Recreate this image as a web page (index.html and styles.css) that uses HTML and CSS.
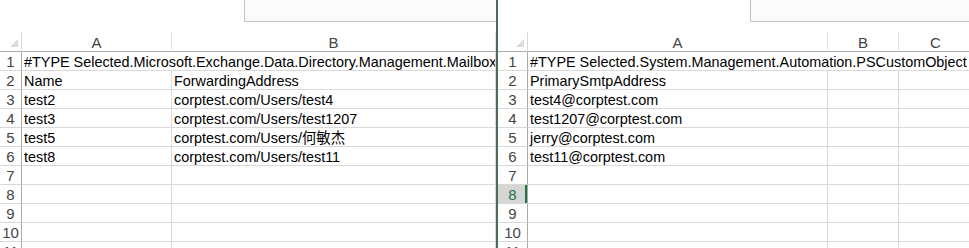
FILE: index.html
```html
<!DOCTYPE html>
<html lang="zh-CN">
<head>
    <meta charset="UTF-8">
    <title>Export compare</title>
    <link rel="stylesheet" href="styles.css">
</head>
<body>
<div class="screen">
    <!-- Ventana izquierda -->
    <section class="pane pane-left">
        <div class="ribbon"><div class="formula"></div></div>
        <div class="sheet sheet-left">
            <div class="corner"></div>
            <div class="colhead">A</div>
            <div class="colhead">B</div>

            <div class="rowhead">1</div><div class="cell span-2">#TYPE Selected.Microsoft.Exchange.Data.Directory.Management.Mailbox</div>
            <div class="rowhead">2</div><div class="cell">Name</div><div class="cell">ForwardingAddress</div>
            <div class="rowhead">3</div><div class="cell">test2</div><div class="cell">corptest.com/Users/test4</div>
            <div class="rowhead">4</div><div class="cell">test3</div><div class="cell">corptest.com/Users/test1207</div>
            <div class="rowhead">5</div><div class="cell">test5</div><div class="cell">corptest.com/Users/何敏杰</div>
            <div class="rowhead">6</div><div class="cell">test8</div><div class="cell">corptest.com/Users/test11</div>
            <div class="rowhead">7</div><div class="cell"></div><div class="cell"></div>
            <div class="rowhead">8</div><div class="cell"></div><div class="cell"></div>
            <div class="rowhead">9</div><div class="cell"></div><div class="cell"></div>
            <div class="rowhead">10</div><div class="cell"></div><div class="cell"></div>
            <div class="rowhead">11</div><div class="cell"></div><div class="cell"></div>
        </div>
    </section>

    <div class="divider"></div>

    <!-- Ventana derecha -->
    <section class="pane pane-right">
        <div class="ribbon"><div class="formula formula-right"></div></div>
        <div class="sheet sheet-right">
            <div class="corner"></div>
            <div class="colhead">A</div>
            <div class="colhead">B</div>
            <div class="colhead">C</div>
            <div class="colhead"></div>

            <div class="rowhead">1</div><div class="cell span-4">#TYPE Selected.System.Management.Automation.PSCustomObject</div>
            <div class="rowhead">2</div><div class="cell">PrimarySmtpAddress</div><div class="cell"></div><div class="cell"></div><div class="cell"></div>
            <div class="rowhead">3</div><div class="cell">test4@corptest.com</div><div class="cell"></div><div class="cell"></div><div class="cell"></div>
            <div class="rowhead">4</div><div class="cell">test1207@corptest.com</div><div class="cell"></div><div class="cell"></div><div class="cell"></div>
            <div class="rowhead">5</div><div class="cell">jerry@corptest.com</div><div class="cell"></div><div class="cell"></div><div class="cell"></div>
            <div class="rowhead">6</div><div class="cell">test11@corptest.com</div><div class="cell"></div><div class="cell"></div><div class="cell"></div>
            <div class="rowhead">7</div><div class="cell"></div><div class="cell"></div><div class="cell"></div><div class="cell"></div>
            <div class="rowhead active">8</div><div class="cell"></div><div class="cell"></div><div class="cell"></div><div class="cell"></div>
            <div class="rowhead">9</div><div class="cell"></div><div class="cell"></div><div class="cell"></div><div class="cell"></div>
            <div class="rowhead">10</div><div class="cell"></div><div class="cell"></div><div class="cell"></div><div class="cell"></div>
            <div class="rowhead">11</div><div class="cell"></div><div class="cell"></div><div class="cell"></div><div class="cell"></div>
        </div>
    </section>
</div>
</body>
</html>
```

FILE: styles.css
```css
/* General */
body {
    margin: 0;
    background: #ffffff;
    font-family: 'Liberation Sans', 'Noto Sans CJK SC', sans-serif;
    font-size: 14.4px;
    color: #000;
}
.screen {
    display: flex;
    width: 969px;
    height: 248px;
    overflow: hidden;
}
.pane {
    flex: none;
    overflow: hidden;
}
.pane-left {
    width: 496px;
}
.pane-right {
    flex: 1;
}
.divider {
    flex: none;
    width: 2px;
    background: #4f6a58;
}

/* Barra superior */
.ribbon {
    height: 32px;
}
.formula {
    margin-left: 244px;
    height: 22px;
    box-sizing: border-box;
    background: #fbfbfb;
    border-left: 1px solid #c3c3c3;
    border-bottom: 1px solid #c3c3c3;
}
.formula-right {
    margin-left: 252px;
}

/* Hoja */
.sheet {
    display: grid;
    grid-template-rows: 20px;
    grid-auto-rows: 19px;
}
.sheet-left {
    grid-template-columns: 22px 150px 324px;
}
.sheet-right {
    grid-template-columns: 30px 300px 71px 74px 60px;
}
.sheet > div {
    box-sizing: border-box;
    border-right: 1px solid #d9d9d9;
    border-bottom: 1px solid #d9d9d9;
    white-space: nowrap;
    overflow: hidden;
}
.corner {
    position: relative;
}
.corner::after {
    content: "";
    position: absolute;
    right: 3px;
    bottom: 4px;
    border-style: solid;
    border-width: 0 0 8px 8px;
    border-color: transparent transparent #dcdcdc transparent;
}
.sheet > .corner,
.sheet > .colhead {
    border-bottom-color: #ababab;
}
.sheet > .colhead {
    border-right-color: #e2e2e2;
    text-align: center;
    color: #444;
    line-height: 21px;
    font-size: 15px;
}
.sheet > .rowhead {
    border-right-color: #ababab;
    text-align: center;
    color: #444;
    line-height: 20px;
    font-size: 15px;
}
.sheet > .rowhead.active {
    background: #d6d6d6;
    color: #217346;
    box-shadow: inset -2px 0 0 #217346;
}
.cell {
    padding-left: 2px;
    line-height: 20px;
}
.span-2 {
    grid-column: span 2;
}
.span-4 {
    grid-column: span 4;
}
```
